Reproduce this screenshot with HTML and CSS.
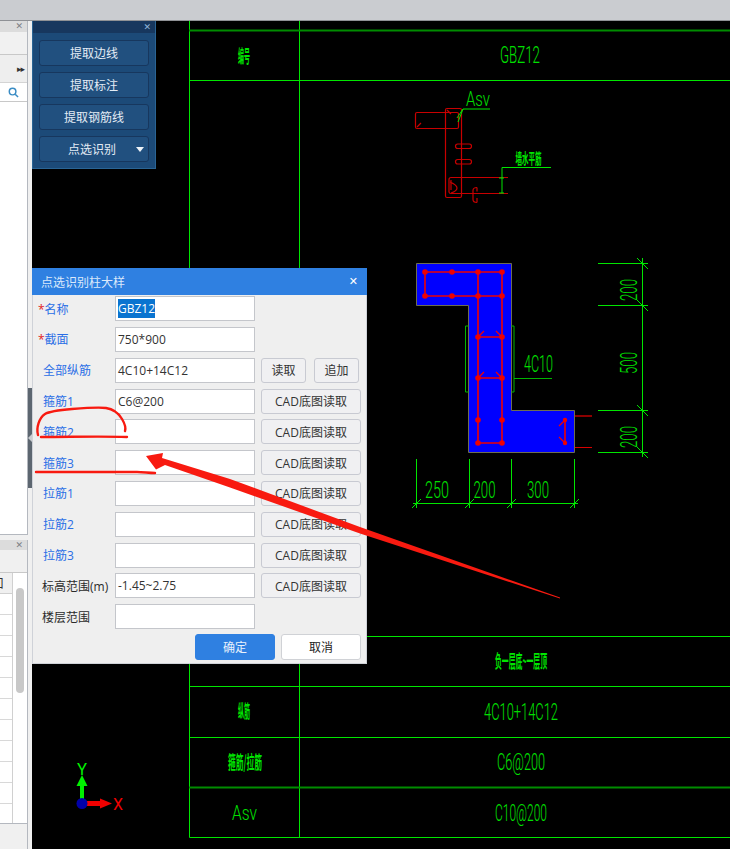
FILE: index.html
```html
<!DOCTYPE html>
<html lang="zh-CN">
<head>
<meta charset="utf-8">
<title>点选识别柱大样</title>
<link rel="stylesheet" href="styles.css">
</head>
<body>
<div class="app">
  <div class="topbar"></div>
  <div class="main">
    <aside class="side">
      <div class="panels">
        <section class="panel panel-top">
          <div class="panel-head">✕</div>
          <div class="panel-row"></div>
          <div class="panel-row panel-row-tall"><span class="more">▸▸</span></div>
          <div class="panel-search">
            <svg class="search-icon" viewBox="0 0 12 12"><circle cx="5" cy="5" r="3.6"/><path d="M7.8 7.8 11 11"/></svg>
          </div>
          <div class="panel-list"></div>
        </section>
        <section class="panel panel-bottom">
          <div class="panel-head">✕</div>
          <div class="panel-row panel-row-b"></div>
          <div class="grid-wrap">
            <div class="grid-main">
              <div class="grid-head"><span>口</span></div>
              <div class="grid-row"></div><div class="grid-row"></div><div class="grid-row"></div>
              <div class="grid-row"></div><div class="grid-row"></div><div class="grid-row"></div>
              <div class="grid-row"></div><div class="grid-row"></div><div class="grid-row"></div>
              <div class="grid-row"></div><div class="grid-row"></div>
            </div>
            <div class="grid-scroll"><div class="thumb"></div></div>
          </div>
        </section>
      </div>
      <div class="splitter"><span class="handle"></span></div>
    </aside>
    <main class="canvas">
      <svg class="cad" viewBox="32 21 698 828" width="698" height="828">
        <!-- table -->
        <g class="ln">
          <path d="M189.5 21V837.5H730M299.5 21V837.5"/>
          <path d="M189 80.5H730M189 636.5H730M189 686.5H730M189 737.5H730"/>
        </g>
        <path class="ln-dark" d="M189 30.5H730M189 787.5H730"/>
        <text class="cad-t" x="500" y="63" textLength="40" lengthAdjust="spacingAndGlyphs">GBZ12</text>
        <text class="cad-c" x="238" y="63" textLength="12" lengthAdjust="spacingAndGlyphs">编号</text>
        <text class="cad-c" x="495" y="668" textLength="52" lengthAdjust="spacingAndGlyphs">负一层底~一层顶</text>
        <text class="cad-c" x="238" y="718" textLength="12" lengthAdjust="spacingAndGlyphs">纵筋</text>
        <text class="cad-c" x="228" y="769" textLength="34" lengthAdjust="spacingAndGlyphs">箍筋/拉筋</text>
        <text class="cad-t" x="484" y="720" textLength="74" lengthAdjust="spacingAndGlyphs">4C10+14C12</text>
        <text class="cad-t" x="497" y="770" textLength="48" lengthAdjust="spacingAndGlyphs">C6@200</text>
        <text class="cad-a" x="232" y="820" textLength="25" lengthAdjust="spacingAndGlyphs">Asv</text>
        <text class="cad-t" x="495" y="821" textLength="52" lengthAdjust="spacingAndGlyphs">C10@200</text>

        <!-- stirrup detail -->
        <g class="dr">
          <rect x="415.5" y="112.5" width="43" height="16" rx="1.5"/>
          <rect x="445.5" y="108.5" width="16" height="89" rx="1.5"/>
          <path d="M417 127l4-4M447 110l4 4"/>
          <rect x="455.5" y="144" width="16" height="4.5" rx="2.2"/>
          <rect x="455.5" y="159.5" width="16" height="4.5" rx="2.2"/>
          <path d="M508 177.5H451q-2 0-2 2V192q0 1.500 2 1.500H508"/>
          <path d="M450 182q7 3 7 6t-6 5M451 180v10"/>
          <path d="M477 187.500q-4 0-4 3v9q0 3 4 3"/>
          <path d="M477 187.500v4M477 198v4.500"/>
        </g>
        <path class="ln" d="M457 118l6-9H490M463 109l-5 13M502 193V167.500H551M499 178h5M499 193h5"/>
        <text class="cad-a" x="466" y="106" textLength="24" lengthAdjust="spacingAndGlyphs">Asv</text>
        <text class="cad-s" x="515.500" y="164" textLength="26" lengthAdjust="spacingAndGlyphs">墙水平筋</text>

        <!-- section -->
        <path class="sec" d="M416.500 263.500H511.500V410.500H574.500V452.500H468.500V305.500H416.500Z"/>
        <g class="rb">
          <path d="M425 272H502M425 296H502M425 272V296M478 272V443M502 272V443M478 337H502M478 378H502M478 443H502M565 420V443"/>
          <path class="rb-thin" d="M478 337l6-6M502 337l-6-6M478 378l6-6M502 378l-6-6M565 420l-6 6M565 443l-6-6"/>
        </g>
        <g class="rb-nodes">
          <circle cx="425" cy="272" r="2.800"/><circle cx="452" cy="272" r="2.800"/><circle cx="478" cy="272" r="2.800"/><circle cx="502" cy="272" r="2.800"/>
          <circle cx="425" cy="296" r="2.800"/><circle cx="452" cy="296" r="2.800"/><circle cx="478" cy="296" r="2.800"/><circle cx="502" cy="296" r="2.800"/>
          <circle cx="478" cy="337" r="2.800"/><circle cx="502" cy="337" r="2.800"/>
          <circle cx="478" cy="378" r="2.800"/><circle cx="502" cy="378" r="2.800"/>
          <circle cx="478" cy="420" r="2.800"/><circle cx="502" cy="420" r="2.800"/>
          <circle cx="478" cy="443" r="2.800"/><circle cx="502" cy="443" r="2.800"/>
          <circle cx="565" cy="420" r="2.200"/><circle cx="565" cy="443" r="2.200"/>
        </g>
        <path class="dk-tick" d="M575 416H592"/>
        <path class="r-tick" d="M575 447.500H592"/>
        <path class="ln-dim" d="M468.500 326H465.500V392H468.500M511.500 326H514V392H511.500M514 378.500H552"/>
        <text class="cad-t" x="524" y="372" textLength="29" lengthAdjust="spacingAndGlyphs">4C10</text>

        <!-- dimensions -->
        <g class="ln">
          <path d="M598 263.500H648M598 305.500H648M598 410.500H648M598 452.500H648M642.500 258V457"/>
          <path d="M637 258l11 11M637 300l11 11M637 405l11 11M637 447l11 11"/>
          <path d="M416.500 459V508M469.500 459V508M511.500 459V508M574.500 459V508M413 503.500H578"/>
          <path d="M412 508l9-9M465 508l9-9M507 508l9-9M570 508l9-9"/>
        </g>
        <text class="cad-t" x="425" y="498" textLength="24" lengthAdjust="spacingAndGlyphs">250</text>
        <text class="cad-t" x="473.500" y="498" textLength="22" lengthAdjust="spacingAndGlyphs">200</text>
        <text class="cad-t" x="527" y="498" textLength="22" lengthAdjust="spacingAndGlyphs">300</text>
        <text class="cad-t" transform="translate(637 301) rotate(-90)" textLength="22" lengthAdjust="spacingAndGlyphs">200</text>
        <text class="cad-t" transform="translate(637 374) rotate(-90)" textLength="22" lengthAdjust="spacingAndGlyphs">500</text>
        <text class="cad-t" transform="translate(637 448) rotate(-90)" textLength="22" lengthAdjust="spacingAndGlyphs">200</text>

        <!-- axis -->
        <path class="axis-y" d="M82 803V786"/>
        <path class="axis-y-head" d="M82 775l5.500 11h-11z"/>
        <path class="axis-x" d="M82 803.500H100"/>
        <path class="axis-x-head" d="M112 803.500l-12-5v10z"/>
        <circle class="axis-o" cx="82" cy="803.500" r="5.500"/>
        <text class="axis-lbl-y" x="77" y="775" textLength="10" lengthAdjust="spacingAndGlyphs">Y</text>
        <text class="axis-lbl-x" x="113" y="810" textLength="10" lengthAdjust="spacingAndGlyphs">X</text>
      </svg>

      <div class="toolbar">
        <div class="toolbar-head">✕</div>
        <div class="toolbar-body">
          <button class="tb-btn">提取边线</button>
          <button class="tb-btn">提取标注</button>
          <button class="tb-btn">提取钢筋线</button>
          <button class="tb-btn tb-drop"><span class="tb-label">点选识别</span><span class="caret"></span></button>
        </div>
      </div>

      <div class="dialog">
        <div class="dialog-title"><span>点选识别柱大样</span><span class="close">✕</span></div>
        <div class="form">
          <div class="row"><label class="lbl lbl-blue"><i class="req">*</i>名称</label><div class="field"><span class="sel">GBZ12</span></div></div>
          <div class="row"><label class="lbl lbl-blue"><i class="req">*</i>截面</label><div class="field">750*900</div></div>
          <div class="row"><label class="lbl lbl-blue lbl-pad">全部纵筋</label><div class="field">4C10+14C12</div><button class="btn btn-s">读取</button><button class="btn btn-s">追加</button></div>
          <div class="row"><label class="lbl lbl-blue lbl-pad">箍筋1</label><div class="field">C6@200</div><button class="btn btn-l">CAD底图读取</button></div>
          <div class="row"><label class="lbl lbl-blue lbl-pad">箍筋2</label><div class="field"></div><button class="btn btn-l">CAD底图读取</button></div>
          <div class="row"><label class="lbl lbl-blue lbl-pad">箍筋3</label><div class="field"></div><button class="btn btn-l">CAD底图读取</button></div>
          <div class="row"><label class="lbl lbl-blue lbl-pad">拉筋1</label><div class="field"></div><button class="btn btn-l">CAD底图读取</button></div>
          <div class="row"><label class="lbl lbl-blue lbl-pad">拉筋2</label><div class="field"></div><button class="btn btn-l">CAD底图读取</button></div>
          <div class="row"><label class="lbl lbl-blue lbl-pad">拉筋3</label><div class="field"></div><button class="btn btn-l">CAD底图读取</button></div>
          <div class="row"><label class="lbl lbl-dark">标高范围(m)</label><div class="field">-1.45~2.75</div><button class="btn btn-l">CAD底图读取</button></div>
          <div class="row"><label class="lbl lbl-dark">楼层范围</label><div class="field"></div></div>
        </div>
        <div class="dialog-foot">
          <button class="btn-ok">确定</button>
          <button class="btn-cancel">取消</button>
        </div>
      </div>
    </main>
  </div>
  <svg class="marks" viewBox="0 0 730 849" width="730" height="849">
    <path class="mark" d="M38 435C36 428 39 418 45 414C50 411 60 410 72 409C85 408 98 407 106 408C113 409 119 414 122 419C125 424 126 428 125 431"/>
    <path class="mark" d="M41 437C70 437 100 436 127 437"/>
    <path class="mark" d="M36 472C75 472 115 472 137 472C143 472 149 473 155 473"/>
    <path class="mark-fill" d="M146 456L163 453L162 458L230 479L360 527L560 597.500L560 598.500L360 533.500L230 487.500L165 465L156 469.500Z"/>
  </svg>
</div>
</body>
</html>
```
FILE: styles.css
```css
* { box-sizing: border-box; }
html, body { margin: 0; padding: 0; }
body { background: #000; font-family: "Open Sans", "Noto Sans CJK SC", sans-serif; font-size: 12px; }
.app { position: relative; width: 730px; height: 849px; overflow: hidden; display: flex; flex-direction: column; }
.topbar { height: 21px; background: #caccd0; border-bottom: 1px solid #8f9195; flex: none; }
.main { display: flex; flex: 1; min-height: 0; }

/* left dock */
.side { width: 32px; flex: none; display: flex; background: #f0f0f0; }
.panels { width: 28px; flex: none; display: flex; flex-direction: column; }
.panel { background: #f0f0f0; overflow: hidden; }
.panel-top { height: 514px; background: #fff; border-right: 1px solid #b4b8bf; border-bottom: 1px solid #b4b8bf; }
.panel-bottom { margin-top: 5px; border-right: 1px solid #b4b8bf; flex: 1; }
.panel-head { height: 11px; background: #dcdcdc; color: #7b7f85; font-size: 9px; line-height: 11px; text-align: right; padding-right: 4px; font-weight: 700; font-family: "DejaVu Sans", sans-serif; }
.panel-row { height: 23px; background: #f1f1f1; border-bottom: 1px solid #c8c8c8; }
.panel-row-tall { height: 28px; background: #eee; border-bottom: 1px solid #d4d4d4; display: flex; justify-content: flex-end; align-items: center; padding-right: 3px; }
.more { font-size: 9px; letter-spacing: -1px; color: #333; white-space: nowrap; font-family: "DejaVu Sans", sans-serif; }
.panel-search { height: 19px; background: #fff; border-bottom: 1px solid #c8c8c8; display: flex; justify-content: flex-end; align-items: center; padding-right: 8px; }
.search-icon { width: 11px; height: 11px; fill: none; stroke: #3a8cc4; stroke-width: 1.6; }
.panel-list { height: 431px; background: #fff; }
.panel-row-b { height: 23px; background: #f0f0f0; border-bottom: 1px solid #c8c8c8; }
.panel-bottom .panel-head { height: 10px; }
.grid-wrap { display: flex; height: 251px; background: #fff; border-bottom: 1px solid #b4b8bf; }
.grid-main { width: 13px; flex: none; border-right: 1px solid #d0d0d0; overflow: hidden; }
.grid-head { height: 21px; background: #f0f0f0; border-bottom: 1px solid #d0d0d0; display: flex; justify-content: flex-end; align-items: center; overflow: hidden; color: #333; padding-right: 8px; }
.grid-head span { flex: none; }
.grid-row { height: 21px; border-bottom: 1px solid #d8d8d8; }
.grid-scroll { flex: 1; padding: 15px 3px 0; }
.thumb { height: 105px; width: 8px; background: #c8c8c8; border-radius: 4px; }
.splitter { flex: 1; padding-top: 367px; }
.handle { display: block; height: 100px; background: #5c6670; position: relative; }
.handle::after { content: ""; position: absolute; left: 0; top: 46px; border: 4px solid transparent; border-left-width: 0; border-right: 4px solid #c8ccd0; }

/* canvas */
.canvas { flex: 1; position: relative; background: #000; min-width: 0; }
.cad { display: block; }
.ln { fill: none; stroke: #00e600; stroke-width: 1; }
.ln path { fill: none; }
.ln-dark { fill: none; stroke: #008c00; stroke-width: 2; }
.ln-dim { fill: none; stroke: #00b400; stroke-width: 1; }
.cad-t { font-family: "Roboto", sans-serif; font-size: 24px; fill: #00e000; font-weight: 300; }
.cad-a { font-family: "Roboto", sans-serif; font-size: 21px; fill: #00e000; font-weight: 300; }
.cad-c { font-family: "Noto Sans CJK SC", sans-serif; font-size: 18px; fill: #00e600; font-weight: 700; }
.cad-s { font-family: "Noto Sans CJK SC", sans-serif; font-size: 15px; fill: #00e600; font-weight: 700; }
.dr { fill: none; stroke: #c80000; stroke-width: 1.2; }
.sec { fill: #0000ff; stroke: #6d6d50; stroke-width: 1; }
.rb { fill: none; stroke: #f00000; stroke-width: 1.6; }
.rb-thin { stroke-width: 1.3; }
.rb-nodes { fill: #f00000; }
.dk-tick { stroke: #8c0000; stroke-width: 2; }
.r-tick { stroke: #d80000; stroke-width: 1; }
.axis-y { stroke: #00f000; stroke-width: 4; }
.axis-y-head { fill: #00f000; }
.axis-x { stroke: #f00000; stroke-width: 5; }
.axis-x-head { fill: #f00000; }
.axis-o { fill: #0000a8; }
.axis-lbl-y { font-family: "Roboto", sans-serif; font-size: 17px; font-weight: 400; fill: #00f000; }
.axis-lbl-x { font-family: "Roboto", sans-serif; font-size: 17px; font-weight: 400; fill: #f00000; }

/* floating toolbar */
.toolbar { position: absolute; left: 0; top: 0; width: 124px; height: 148px; background: #1c4a78; border: 1px solid #2a6494; border-top: 0; }
.toolbar-head { height: 12px; background: #17375e; color: #8fb4d8; font-size: 9px; line-height: 12px; text-align: right; padding-right: 4px; font-weight: 700; font-family: "DejaVu Sans", sans-serif; }
.toolbar-body { display: flex; flex-direction: column; gap: 6px; padding: 7px 6px 0 6px; }
.tb-btn { height: 26px; width: 110px; padding: 0; font: inherit; color: #e4ecf5; background: #21507f; border: 1px solid #17375e; border-radius: 3px; }
.tb-drop { display: flex; align-items: center; padding-left: 28px; }
.tb-label { flex: 1; text-align: left; }
.caret { width: 0; height: 0; border: 4px solid transparent; border-top: 5px solid #eef3f8; border-bottom: 0; margin-right: 4px; }

/* dialog */
.dialog { position: absolute; left: 0; top: 247px; width: 335px; height: 396px; background: #efefef; border: 1px solid #cfd2d8; border-top: 0; }
.dialog-title { height: 27px; margin: 0 -1px; background: #2f80e1; color: #dce9fb; display: flex; justify-content: space-between; align-items: center; padding: 0 9px; font-size: 12px; }
.close { color: #fff; font-size: 11px; font-family: "DejaVu Sans", sans-serif; font-weight: 700; }
.form { padding: 1.2px 0 0 5px; display: flex; flex-direction: column; gap: 5.8px; }
.row { display: flex; align-items: center; height: 25px; }
.lbl { width: 77px; flex: none; font-size: 12px; white-space: nowrap; }
.lbl-blue { color: #2a6ee6; }
.lbl-pad { padding-left: 5px; }
.lbl-dark { color: #2b2b2b; padding-left: 4px; }
.req { font-style: normal; color: #e02020; }
.field { width: 140px; height: 25px; flex: none; background: #fff; border: 1px solid #c4c6cb; color: #333; line-height: 23px; padding-left: 2px; font-size: 12px; }
.sel { background: #0a74d0; color: #fff; display: inline-block; line-height: 19px; height: 19px; vertical-align: middle; margin-top: -2px; }
.btn { height: 25px; padding: 0; flex: none; font: inherit; color: #333; background: #f0f0f2; border: 1px solid #c8cad2; border-radius: 3px; margin-left: 6px; }
.btn-s { width: 45px; }
.btn-s + .btn-s { margin-left: 8px; }
.btn-l { width: 100px; }
.dialog-foot { position: absolute; right: 5px; bottom: 3px; display: flex; gap: 6px; }
.btn-ok, .btn-cancel { width: 80px; height: 26px; padding: 0; font: inherit; border-radius: 3px; }
.btn-ok { background: #2f80e1; color: #e8f1fc; border: 1px solid #2f80e1; }
.btn-cancel { background: #fff; color: #222; border: 1px solid #d0d2d6; }

/* hand-drawn marks */
.marks { position: absolute; left: 0; top: 0; pointer-events: none; }
.mark { fill: none; stroke: #f81a10; stroke-width: 2.4; stroke-linecap: round; }
.mark-fill { fill: #f81a10; }
```
